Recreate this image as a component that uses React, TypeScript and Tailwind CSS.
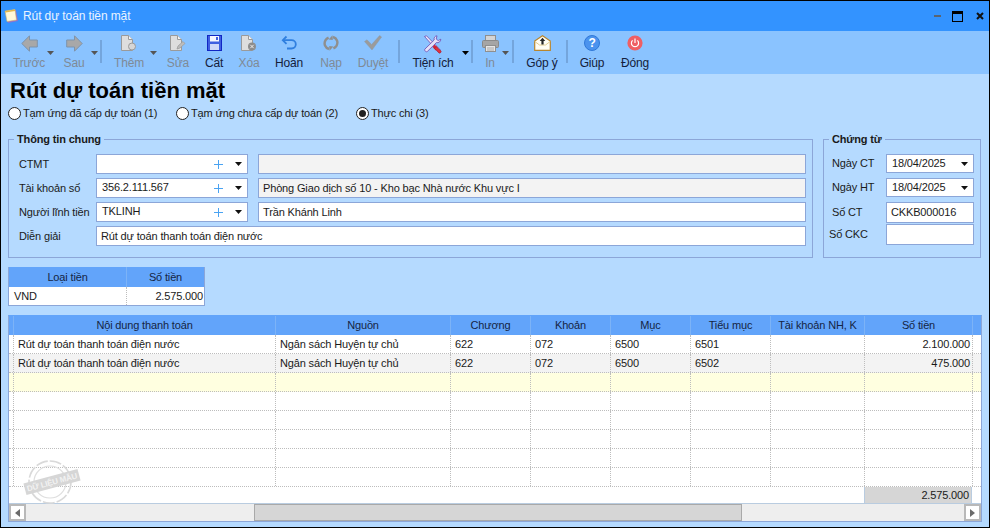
import type { ReactNode } from "react"

const fieldBorder = "border border-[#8ca6d8]"

function ArrowLeft() {
  return (
    <svg width="17" height="17" viewBox="0 0 17 17">
      <path d="M8.5 .8 L.8 8.5 L8.5 16.2 V12 H16.3 V5 H8.5 Z" fill="#a8a8a8" stroke="#7d93ab" strokeWidth="1" />
    </svg>
  )
}

function ArrowRight() {
  return (
    <svg width="17" height="17" viewBox="0 0 17 17">
      <path d="M8.5 .8 L16.2 8.5 L8.5 16.2 V12 H.7 V5 H8.5 Z" fill="#a8a8a8" stroke="#7d93ab" strokeWidth="1" />
    </svg>
  )
}

function Paper({ children }: { children?: ReactNode }) {
  return (
    <svg width="16" height="16" viewBox="0 0 16 16">
      <path d="M.5 .5 H7.5 L11.5 4.5 V15.5 H.5 Z" fill="#dedede" stroke="#9a9a9a" />
      <path d="M7.5 .5 V4.5 H11.5" fill="#f4f4f4" stroke="#9a9a9a" />
      {children}
    </svg>
  )
}

function FloppyIcon() {
  return (
    <svg width="15" height="16" viewBox="0 0 15 16">
      <rect x=".5" y=".5" width="14" height="15" fill="#3f5fe0" stroke="#1127c4" />
      <rect x="3" y="1" width="9" height="5.5" fill="#f4f6ff" />
      <rect x="9" y="2" width="2" height="3" fill="#3f5fe0" />
      <rect x="3" y="9" width="9" height="6" fill="#cfd8f8" />
    </svg>
  )
}

function UndoIcon() {
  return (
    <svg width="16" height="16" viewBox="0 0 16 16" fill="none" stroke="#2f7fdf" strokeWidth="1.8">
      <path d="M5.5 1.5 L1.8 5.2 L5.5 8.9" />
      <path d="M2 5.2 H10.5 C13 5.2 14.8 7 14.8 9.3 C14.8 11.7 13 13.5 10.5 13.5 H6" />
    </svg>
  )
}

function SyncIcon() {
  return (
    <svg width="16" height="16" viewBox="0 0 16 16" fill="none" stroke="#8f8f8f" strokeWidth="2.4">
      <path d="M6 14 C2 12.8 .6 8.8 2.4 5.4 C3.2 4 4.2 3.2 5.6 2.6" />
      <path d="M10 2 C14 3.2 15.4 7.2 13.6 10.6 C12.8 12 11.8 12.8 10.4 13.4" />
      <path d="M9.5 .3 L9.8 5 L5.6 4.6 Z" fill="#8f8f8f" stroke="none" />
      <path d="M6.5 15.7 L6.2 11 L10.4 11.4 Z" fill="#8f8f8f" stroke="none" />
    </svg>
  )
}

function CheckIcon() {
  return (
    <svg width="18" height="16" viewBox="0 0 18 16">
      <path d="M.5 6.5 L3 4.8 L7.6 9.5 L15.6 .6 L17.6 2 L8 15 Z" fill="#9b9b9b" stroke="#8d9aa8" strokeWidth=".5" />
    </svg>
  )
}

function ToolsIcon() {
  return (
    <svg width="20" height="19" viewBox="0 0 20 19">
      <path d="M1.5 1.5 L3.5 .8 L17 14.5 L15 16.5 Z" fill="#efeafa" stroke="#6a48b0" strokeWidth=".8" />
      <path d="M11.5 9.5 L15 13 L12.8 15.5 L9.5 12 Z" fill="#d3283c" />
      <path d="M13 11.5 L18 16 C18.6 17 17 18.6 16 18 L11.6 13.2 Z" fill="#e2333f" stroke="#a31c33" strokeWidth=".7" />
      <path
        d="M14 .8 C11.8 1 10.6 3 11.2 5 L2 14 C.8 15.2 3 17.6 4.4 16.4 L13.4 7.6 C15.6 8.2 17.8 6.6 17.8 4.2 L15.2 5.6 L13.2 4 Z"
        fill="#e6e1f8"
        stroke="#6a48b0"
        strokeWidth=".8"
      />
    </svg>
  )
}

function PrinterIcon() {
  return (
    <svg width="17" height="17" viewBox="0 0 17 17">
      <rect x="3.5" y=".5" width="10" height="5" fill="#d4d4d4" stroke="#8f8f8f" />
      <rect x=".5" y="5.5" width="16" height="7" rx="1" fill="#a5a5a5" stroke="#8a8a8a" />
      <rect x="3.5" y="10.5" width="10" height="6" fill="#e6e6e6" stroke="#8f8f8f" />
      <path d="M5 13 H12 M5 15 H12" stroke="#a8a8a8" />
    </svg>
  )
}

function EnvelopeIcon() {
  return (
    <svg width="17" height="16" viewBox="0 0 17 16">
      <path d="M.7 6 L8.5 .7 L16.3 6 V15.3 H.7 Z" fill="#fffdf4" stroke="#b8862e" strokeWidth="1.2" />
      <path d="M.8 6.5 L5.5 10 H11.5 L16.2 6.5" fill="none" stroke="#e2cc90" />
      <path d="M8.5 2.8 L11.3 6 H9.6 V9.5 H7.4 V6 H5.7 Z" fill="#262626" />
    </svg>
  )
}

function HelpIcon() {
  return (
    <div className="flex h-4 w-4 items-center justify-center rounded-full border border-[#2f78d8] bg-[#4b93ee] text-[12px] font-bold leading-none text-white">
      ?
    </div>
  )
}

function PowerIcon() {
  return (
    <svg width="16" height="16" viewBox="0 0 16 16">
      <circle cx="8" cy="8" r="7.6" fill="#ef5f64" />
      <path d="M5.6 5.4 A3.6 3.6 0 1 0 10.4 5.4" fill="none" stroke="#fff" strokeWidth="1.2" />
      <path d="M8 3.6 V8" stroke="#fff" strokeWidth="1.2" />
    </svg>
  )
}

function Caret({ color = "#555555", className = "" }: { color?: string; className?: string }) {
  return (
    <svg width="7" height="4" viewBox="0 0 7 4" className={`mt-[17px] shrink-0 ${className}`}>
      <path d="M0 0 H7 L3.5 4 Z" fill={color} />
    </svg>
  )
}

function ToolButton({
  icon,
  label,
  className,
  disabled = false,
}: {
  icon: ReactNode
  label: string
  className: string
  disabled?: boolean
}) {
  return (
    <div className={`flex shrink-0 flex-col items-center ${className}`}>
      <div className="flex h-[21px] items-start justify-center pt-px">{icon}</div>
      <div className={`h-4 whitespace-nowrap text-[12px] leading-4 ${disabled ? "text-[#7f8a96]" : "text-[#14203a]"}`}>{label}</div>
    </div>
  )
}

function ToolSeparator({ className }: { className: string }) {
  return <div className={`mt-[6px] h-[23px] w-[2px] shrink-0 bg-[#74a5dc] ${className}`} />
}

function Toolbar() {
  return (
    <div className="flex h-[43px] shrink-0 items-start bg-[#8ac3ff] pl-[10px] pt-[3px]">
      <ToolButton className="w-[36px]" label="Trước" disabled icon={<ArrowLeft />} />
      <Caret />
      <ToolButton className="ml-[3px] w-[34px]" label="Sau" disabled icon={<ArrowRight />} />
      <Caret />
      <ToolSeparator className="ml-[2px]" />
      <ToolButton
        className="ml-[10px] w-[34px]"
        label="Thêm"
        disabled
        icon={
          <Paper>
            <circle cx="11" cy="11.5" r="3.5" fill="#d6d6d6" stroke="#9a9a9a" />
          </Paper>
        }
      />
      <Caret className="ml-[4px]" />
      <ToolButton
        className="ml-[5px] w-[32px]"
        label="Sửa"
        disabled
        icon={
          <Paper>
            <path d="M7 14 L8 11 L13 6.5 L15 8.5 L10 13 Z" fill="#bcbcbc" stroke="#9a9a9a" strokeWidth=".7" />
          </Paper>
        }
      />
      <ToolButton className="ml-[4px] w-[32px]" label="Cất" icon={<FloppyIcon />} />
      <ToolButton
        className="ml-[3px] w-[32px]"
        label="Xóa"
        disabled
        icon={
          <Paper>
            <circle cx="11" cy="11.5" r="4" fill="#8c8c8c" />
            <path d="M9.3 9.8 L12.7 13.2 M12.7 9.8 L9.3 13.2" stroke="#eeeeee" />
          </Paper>
        }
      />
      <ToolButton className="ml-[6px] w-[36px]" label="Hoãn" icon={<UndoIcon />} />
      <ToolButton className="ml-[8px] w-[32px]" label="Nạp" disabled icon={<SyncIcon />} />
      <ToolButton className="ml-[8px] w-[36px]" label="Duyệt" disabled icon={<CheckIcon />} />
      <ToolSeparator className="ml-[7px]" />
      <ToolButton className="ml-[10px] w-[46px]" label="Tiện ích" icon={<ToolsIcon />} />
      <Caret color="#000000" className="ml-[6px]" />
      <ToolSeparator className="ml-[2px]" />
      <ToolButton className="ml-[5px] w-[24px]" label="In" disabled icon={<PrinterIcon />} />
      <Caret />
      <ToolSeparator className="ml-[3px]" />
      <ToolButton className="ml-[8px] w-[40px]" label="Góp ý" icon={<EnvelopeIcon />} />
      <ToolSeparator className="ml-[4px]" />
      <ToolButton className="ml-[6px] w-[36px]" label="Giúp" icon={<HelpIcon />} />
      <ToolButton className="ml-[5px] w-[40px]" label="Đóng" icon={<PowerIcon />} />
    </div>
  )
}

function TitleBar() {
  return (
    <div className="flex h-[30px] shrink-0 items-center bg-[#3393ff] pl-[3px]">
      <svg width="16" height="16" viewBox="0 0 16 16" className="shrink-0">
        <path d="M2 4 L12 2 L14 13 L4 15 Z" fill="#8f6fd0" />
        <path d="M1 3 L11 1.5 L12.5 12 L3 13.5 Z" fill="#fff8d8" stroke="#c9b26a" strokeWidth=".6" />
        <path d="M1.5 4.5 L11 3 L10.8 1.4 L1.2 3 Z" fill="#e4b84a" />
      </svg>
      <span className="ml-[3px] text-[12px] tracking-[-0.1px] text-[#eaf3ff]">Rút dự toán tiền mặt</span>
      <div className="ml-auto flex items-center">
        <div className="h-[2px] w-[7px] bg-[#5a6470]" />
        <div className="ml-[11px] h-[11px] w-[11px] border border-t-[3px] border-black" />
        <svg width="8" height="8" viewBox="0 0 8 8" className="ml-[13px] mr-[5px]">
          <path d="M1 1 L7 7 M7 1 L1 7" stroke="#111" strokeWidth="2" />
        </svg>
      </div>
    </div>
  )
}

function Radio({ label, checked = false, className = "" }: { label: string; checked?: boolean; className?: string }) {
  return (
    <div className={`flex items-center ${className}`}>
      <div className="flex h-[13px] w-[13px] items-center justify-center rounded-full border border-[#222222] bg-white">
        {checked ? <div className="h-[7px] w-[7px] rounded-full bg-[#222222]" /> : null}
      </div>
      <span className="ml-[2px] whitespace-nowrap text-[11px] leading-4 text-[#1a1a1a]">{label}</span>
    </div>
  )
}

function Combo({ value, widthClass, plus = false }: { value: string; widthClass: string; plus?: boolean }) {
  return (
    <div className={`flex h-full items-center bg-white pl-[5px] text-[11px] text-[#1a1a1a] ${fieldBorder} ${widthClass}`}>
      <span className="-mt-px flex-1">{value}</span>
      {plus ? (
        <svg width="9" height="9" viewBox="0 0 9 9" className="mr-[12px]">
          <path d="M4.5 0 V9 M0 4.5 H9" stroke="#4aa3f2" strokeWidth="1" />
        </svg>
      ) : null}
      <svg width="7" height="4" viewBox="0 0 7 4" className="mr-[5px]">
        <path d="M0 0 H7 L3.5 4 Z" fill="#111111" />
      </svg>
    </div>
  )
}

function TextBox({ value = "", muted = false, className }: { value?: string; muted?: boolean; className: string }) {
  return (
    <div className={`flex items-center pl-[4px] text-[11px] text-[#1a1a1a] ${fieldBorder} ${muted ? "bg-[#f3f3f3]" : "bg-white"} ${className}`}>
      {value}
    </div>
  )
}

function GeneralGroup() {
  const rows = [
    { label: "CTMT", code: "", name: "", muted: true },
    { label: "Tài khoản số", code: "356.2.111.567", name: "Phòng Giao dịch số 10 - Kho bạc Nhà nước Khu vực I", muted: true },
    { label: "Người lĩnh tiền", code: "TKLINH", name: "Trần Khánh Linh", muted: false },
  ]
  return (
    <fieldset className="h-[126px] w-[805px] shrink-0 border border-[#8ca6d8]">
      <legend className="ml-[5px] px-[3px] text-[11px] font-bold leading-[14px] text-[#1a1a1a]">Thông tin chung</legend>
      <div className="flex flex-col gap-1 pl-[10px] pt-[8px]">
        {rows.map((row) => (
          <div key={row.label} className="flex h-5 items-center">
            <div className="w-[77px] whitespace-nowrap text-[11px] text-[#1a1a1a]">{row.label}</div>
            <Combo value={row.code} widthClass="w-[152px]" plus />
            <TextBox value={row.name} muted={row.muted} className="ml-[10px] h-full w-[548px]" />
          </div>
        ))}
        <div className="flex h-5 items-center">
          <div className="w-[77px] text-[11px] text-[#1a1a1a]">Diễn giải</div>
          <TextBox value="Rút dự toán thanh toán điện nước" className="h-full w-[710px]" />
        </div>
      </div>
    </fieldset>
  )
}

function VoucherGroup() {
  return (
    <fieldset className="ml-[10px] h-[126px] w-[158px] shrink-0 border border-[#8ca6d8]">
      <legend className="ml-[5px] px-[3px] text-[11px] font-bold leading-[14px] text-[#1a1a1a]">Chứng từ</legend>
      <div className="flex flex-col pl-[8px] pt-[8px] text-[11px] text-[#1a1a1a]">
        <div className="flex h-[19px] items-center">
          <div className="w-[54px]">Ngày CT</div>
          <Combo value="18/04/2025" widthClass="w-[88px]" />
        </div>
        <div className="mt-[5px] flex h-[19px] items-center">
          <div className="w-[54px]">Ngày HT</div>
          <Combo value="18/04/2025" widthClass="w-[88px]" />
        </div>
        <div className="mt-[5px] flex h-[21px] items-center">
          <div className="w-[54px]">Số CT</div>
          <TextBox value="CKKB000016" className="h-full w-[88px]" />
        </div>
        <div className="mt-[1px] flex h-[21px] items-center">
          <div className="-ml-[3px] w-[57px]">Số CKC</div>
          <TextBox className="h-full w-[88px]" />
        </div>
      </div>
    </fieldset>
  )
}

function CurrencyTable() {
  return (
    <div className="mt-[9px] w-[197px] border-x border-b border-[#8ca6d8] text-[11px] text-[#1a1a1a]">
      <div className="flex h-5 bg-[#62a4fa] text-[#152544]">
        <div className="flex w-[118px] items-center justify-center border-r border-[#7cb3f7]">Loại tiền</div>
        <div className="flex flex-1 items-center justify-center">Số tiền</div>
      </div>
      <div className="flex h-[18px] bg-white">
        <div className="flex w-[118px] items-center border-r border-dotted border-[#bdbdbd] pl-[5px]">VND</div>
        <div className="flex flex-1 items-center justify-end pr-px">2.575.000</div>
      </div>
    </div>
  )
}

const columns = [
  { width: "w-[262px]", title: "Nội dung thanh toán" },
  { width: "w-[175px]", title: "Nguồn" },
  { width: "w-[80px]", title: "Chương" },
  { width: "w-[80px]", title: "Khoản" },
  { width: "w-[80px]", title: "Mục" },
  { width: "w-[80px]", title: "Tiểu mục" },
  { width: "w-[94px]", title: "Tài khoản NH, K" },
  { width: "w-[108px]", title: "Số tiền" },
]

const rows = [
  { bg: "bg-white", cells: ["Rút dự toán thanh toán điện nước", "Ngân sách Huyện tự chủ", "622", "072", "6500", "6501", "", "2.100.000"] },
  { bg: "bg-[#f3f3f3]", cells: ["Rút dự toán thanh toán điện nước", "Ngân sách Huyện tự chủ", "622", "072", "6500", "6502", "", "475.000"] },
  { bg: "bg-[#ffffe0]", cells: ["", "", "", "", "", "", "", ""] },
  { bg: "bg-white", cells: ["", "", "", "", "", "", "", ""] },
  { bg: "bg-white", cells: ["", "", "", "", "", "", "", ""] },
  { bg: "bg-white", cells: ["", "", "", "", "", "", "", ""] },
  { bg: "bg-white", cells: ["", "", "", "", "", "", "", ""] },
  { bg: "bg-white", cells: ["", "", "", "", "", "", "", ""] },
]

function Stamp() {
  return (
    <svg width="60" height="48" viewBox="0 0 60 48" className="pointer-events-none absolute left-[14px] top-[142px]">
      <circle cx="27" cy="24" r="21" fill="none" stroke="#d9d9d9" strokeWidth="1.6" strokeDasharray="12 2" />
      <circle cx="27" cy="24" r="16" fill="none" stroke="#dedede" strokeWidth="1.2" />
      <g transform="rotate(-15 29 24)">
        <rect x="1" y="18" width="56" height="12" fill="#d6d6d6" />
        <text x="29" y="27" textAnchor="middle" fontSize="8" fontWeight="700" fill="#f2f2f2">
          DỮ LIỆU MẪU
        </text>
      </g>
    </svg>
  )
}

function ScrollButton({ dir }: { dir: "left" | "right" }) {
  return (
    <div className="flex h-full w-[17px] shrink-0 items-center justify-center border-2 border-[#b9b9b9] bg-white">
      <svg width="5" height="8" viewBox="0 0 5 8">
        <path d={dir === "left" ? "M5 0 V8 L0 4 Z" : "M0 0 V8 L5 4 Z"} fill="#6b6b6b" />
      </svg>
    </div>
  )
}

function DetailGrid() {
  return (
    <div className="relative mt-[9px] w-[974px] border border-[#8ca6d8] border-t-[#62a4fa] text-[11px] text-[#1a1a1a]">
      <div className="flex h-[19px] bg-[#62a4fa] text-[#152544]">
        <div className="w-[5px] shrink-0 border-r border-[#7cb3f7]" />
        {columns.map((col) => (
          <div key={col.title} className={`flex shrink-0 items-center justify-center overflow-hidden whitespace-nowrap border-r border-[#7cb3f7] ${col.width}`}>
            {col.title}
          </div>
        ))}
      </div>
      {rows.map((row, i) => (
        <div key={i} className={`flex h-[19px] border-b border-dotted border-[#bdbdbd] ${row.bg}`}>
          <div className="w-[5px] shrink-0 border-r border-dotted border-[#bdbdbd]" />
          {row.cells.map((cell, c) => (
            <div
              key={c}
              className={`flex shrink-0 items-center whitespace-nowrap border-r border-dotted border-[#bdbdbd] ${columns[c].width} ${c === 7 ? "justify-end pr-[2px]" : "pl-[4px]"}`}
            >
              {cell}
            </div>
          ))}
        </div>
      ))}
      <div className="flex h-4 bg-white">
        <div className="w-[855px] shrink-0" />
        <div className="flex w-[108px] items-center justify-end border-x border-[#b9cce0] bg-[#d6d6d6] pr-[2px]">2.575.000</div>
      </div>
      <div className="flex h-[18px] border-t border-[#b9cce0] bg-[#eeeeee]">
        <ScrollButton dir="left" />
        <div className="w-[228px] shrink-0" />
        <div className="h-full w-[488px] shrink-0 border border-[#a9a9a9] bg-[#d6d6d6]" />
        <div className="flex-1" />
        <ScrollButton dir="right" />
      </div>
      <Stamp />
    </div>
  )
}

export default function App() {
  return (
    <div className="flex h-[528px] w-[990px] flex-col overflow-hidden border border-black bg-[#b5daff] font-['Liberation_Sans',Arial,sans-serif] tracking-[-0.15px]">
      <TitleBar />
      <Toolbar />
      <div className="flex-1 pl-[7px]">
        <h1 className="h-[31px] pl-[2px] pt-[3px] text-[22px] font-bold leading-[28px] tracking-normal text-black">Rút dự toán tiền mặt</h1>
        <div className="flex h-4 items-center">
          <Radio label="Tạm ứng đã cấp dự toán (1)" className="w-[168px]" />
          <Radio label="Tạm ứng chưa cấp dự toán (2)" className="w-[180px]" />
          <Radio label="Thực chi (3)" checked />
        </div>
        <div className="mt-[11px] flex">
          <GeneralGroup />
          <VoucherGroup />
        </div>
        <CurrencyTable />
        <DetailGrid />
      </div>
    </div>
  )
}
